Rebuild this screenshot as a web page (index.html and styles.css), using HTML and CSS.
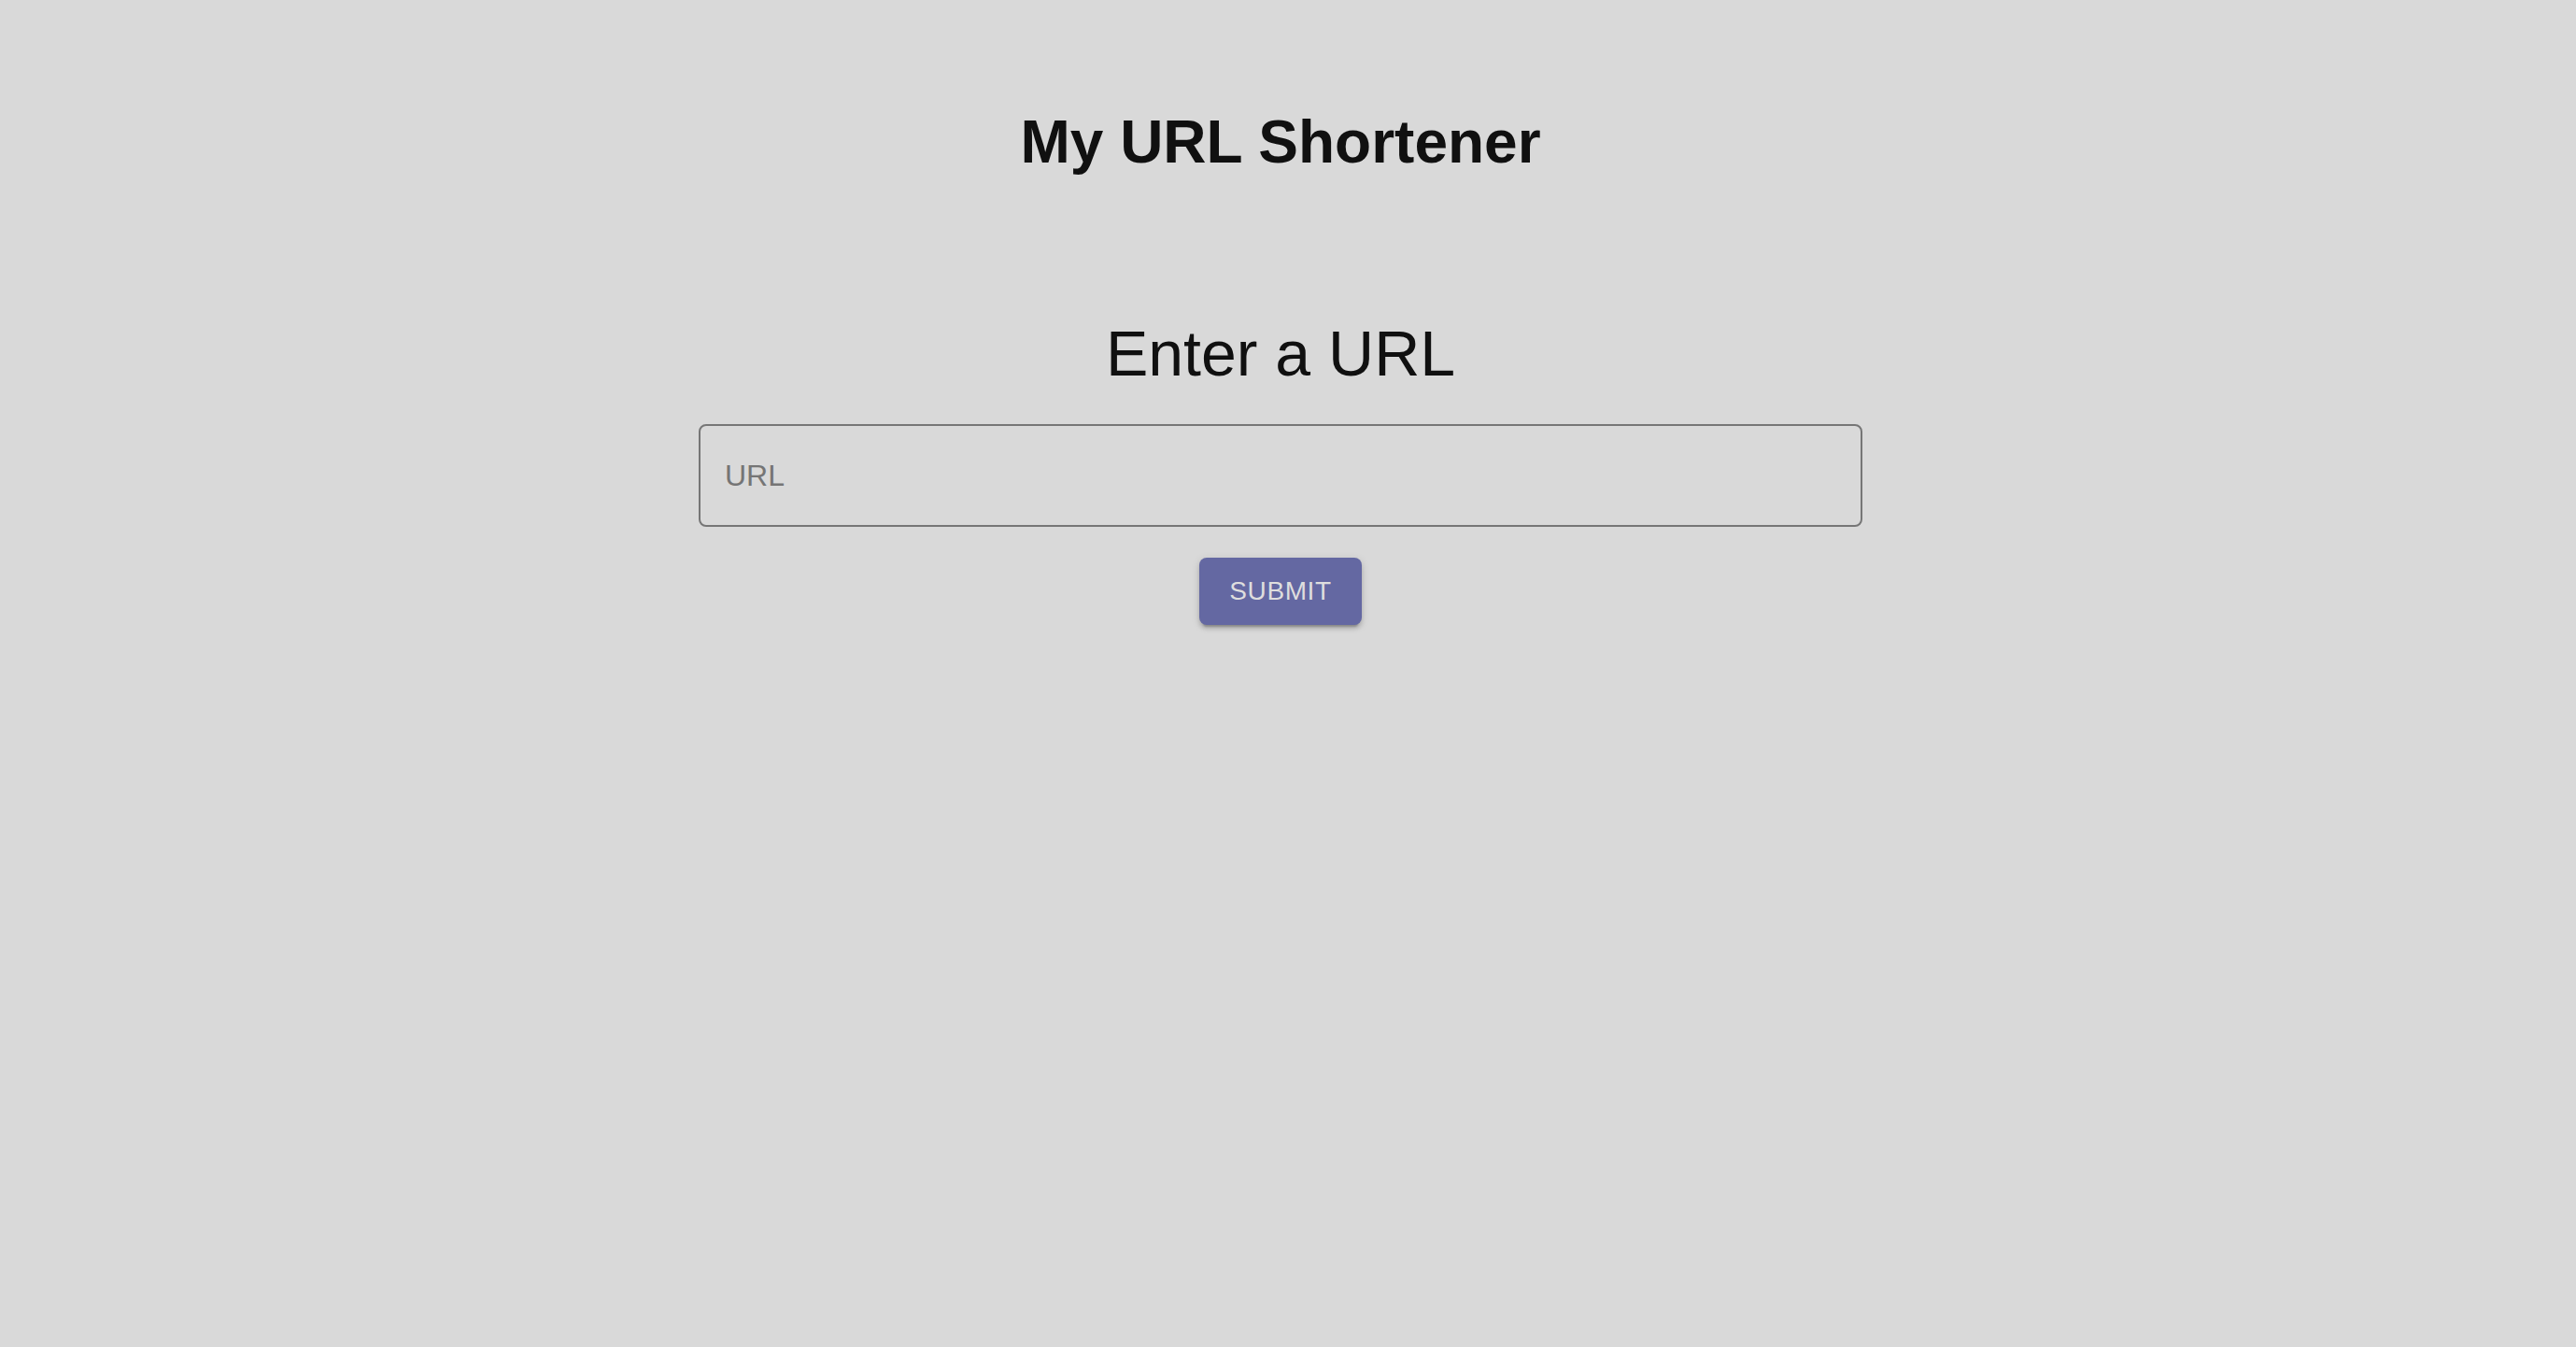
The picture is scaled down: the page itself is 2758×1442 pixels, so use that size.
FILE: index.html
```html
<!DOCTYPE html>
<html lang="en">
<head>
<meta charset="utf-8">
<title>My URL Shortener</title>
<link rel="stylesheet" href="styles.css">
</head>
<body>
<div class="app">
  <h1 class="title">My URL Shortener</h1>
  <form class="form" onsubmit="return false">
    <h2 class="subtitle">Enter a URL</h2>
    <input class="url-input" type="text" placeholder="URL">
    <button class="submit" type="submit">Submit</button>
  </form>
</div>
</body>
</html>
```
FILE: styles.css
```css
html, body {
  margin: 0;
  padding: 0;
  background: #d9d9d9;
}
body {
  font-family: "Liberation Sans", Arial, sans-serif;
  color: #101010;
  min-height: 1442px;
}
.app {
  width: 2742px;
  display: flex;
  flex-direction: column;
  align-items: center;
  padding-top: 115px;
}
.title {
  margin: 0;
  font-size: 64px;
  line-height: 74px;
  font-weight: 700;
}
.form {
  display: flex;
  flex-direction: column;
  align-items: center;
  margin-top: 149px;
}
.subtitle {
  margin: 0;
  font-size: 68px;
  line-height: 80px;
  font-weight: 400;
}
.url-input {
  box-sizing: border-box;
  margin-top: 36px;
  width: 1246px;
  height: 110px;
  border: 2px solid #767676;
  border-radius: 8px;
  background: transparent;
  padding: 0 26px;
  font-family: "Liberation Sans", Arial, sans-serif;
  font-size: 32px;
  color: #101010;
  outline: none;
}
.url-input::placeholder {
  color: #757575;
  opacity: 1;
}
.submit {
  box-sizing: border-box;
  margin-top: 33px;
  width: 174px;
  height: 72px;
  border: none;
  border-radius: 8px;
  background: #6468a2;
  color: #dedede;
  font-family: "Liberation Sans", Arial, sans-serif;
  font-size: 28px;
  letter-spacing: 0.6px;
  text-transform: uppercase;
  box-shadow: 0 6px 2px -4px rgba(0,0,0,0.2), 0 4px 4px 0 rgba(0,0,0,0.14), 0 2px 10px 0 rgba(0,0,0,0.12);
  cursor: pointer;
}
```
